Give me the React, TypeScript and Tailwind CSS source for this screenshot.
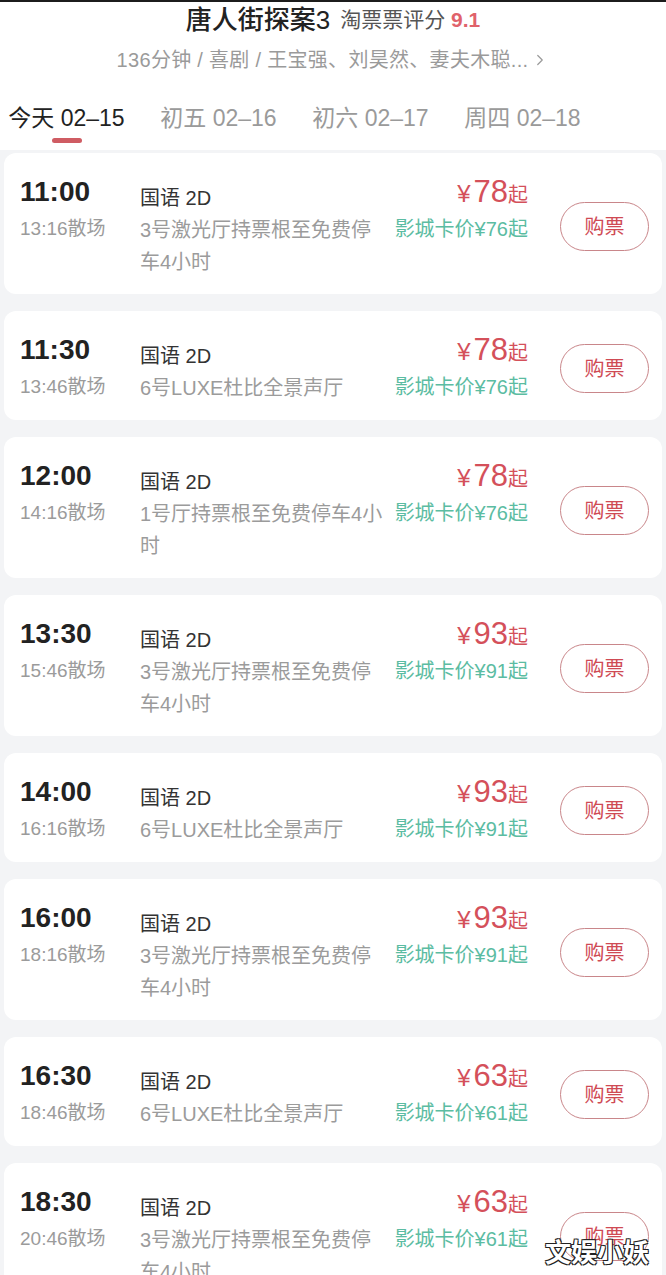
import { ChevronRight } from "lucide-react";

interface Showtime {
  start: string;
  end: string;
  hall: string;
  price: number;
  cardPrice: number;
}

const showtimes: Showtime[] = [
  { start: "11:00", end: "13:16", hall: "3号激光厅持票根至免费停车4小时", price: 78, cardPrice: 76 },
  { start: "11:30", end: "13:46", hall: "6号LUXE杜比全景声厅", price: 78, cardPrice: 76 },
  { start: "12:00", end: "14:16", hall: "1号厅持票根至免费停车4小时", price: 78, cardPrice: 76 },
  { start: "13:30", end: "15:46", hall: "3号激光厅持票根至免费停车4小时", price: 93, cardPrice: 91 },
  { start: "14:00", end: "16:16", hall: "6号LUXE杜比全景声厅", price: 93, cardPrice: 91 },
  { start: "16:00", end: "18:16", hall: "3号激光厅持票根至免费停车4小时", price: 93, cardPrice: 91 },
  { start: "16:30", end: "18:46", hall: "6号LUXE杜比全景声厅", price: 63, cardPrice: 61 },
  { start: "18:30", end: "20:46", hall: "3号激光厅持票根至免费停车4小时", price: 63, cardPrice: 61 },
];

const tabs = [
  { day: "今天", date: "02–15" },
  { day: "初五", date: "02–16" },
  { day: "初六", date: "02–17" },
  { day: "周四", date: "02–18" },
];

const ShowtimeCard = ({ item }: { item: Showtime }) => {
  return (
    <div className="flex items-start rounded-xl bg-white pb-4 pl-4 pt-[22px]">
      <div className="w-[120px] shrink-0">
        <p className="h-[34px] text-[28px] font-bold leading-[34px] text-[#222]">
          {item.start}
        </p>
        <p className="mt-[4px] text-[19px] leading-[32px] text-[#9b9b9b]">
          {item.end}散场
        </p>
      </div>

      <div className="mt-[7px] w-[246px] shrink-0">
        <p className="text-[20px] leading-[32px] text-[#333]">国语 2D</p>
        <p className="text-[20px] leading-[32px] text-[#9b9b9b]">{item.hall}</p>
      </div>

      <div className="flex flex-1 flex-col items-end">
        <div className="flex h-[34px] items-baseline leading-[34px] text-[#d4505a]">
          <span className="mr-[3px] text-[24px]">¥</span>
          <span className="text-[31px]">{item.price}</span>
          <span className="text-[20px]">起</span>
        </div>
        <p className="mt-[4px] whitespace-nowrap text-[20px] leading-[32px] text-[#5bbca2]">
          影城卡价¥{item.cardPrice}起
        </p>
      </div>

      <button
        type="button"
        className="ml-[32px] mr-[13px] flex h-[49px] w-[89px] shrink-0 items-center justify-center self-center rounded-full border border-[#c9868a] text-[20px] text-[#cf4a54]"
      >
        购票
      </button>
    </div>
  );
};

export default function App() {
  return (
    <div
      className="relative h-[1275px] w-[666px] overflow-hidden bg-[#f3f4f6]"
      style={{ fontFamily: '"Liberation Sans", "Noto Sans CJK SC", sans-serif' }}
    >
      <div className="flex h-[150px] flex-col border-t-2 border-[#1c1c1c] bg-white">
        <div className="flex h-[36px] items-center justify-center gap-[10px]">
          <span className="text-[26px] font-medium text-[#222]">唐人街探案3</span>
          <span className="text-[21px] text-[#555]">
            淘票票评分 <span className="font-bold text-[#e0626b]">9.1</span>
          </span>
        </div>

        <div className="mt-[6px] flex h-[32px] items-center justify-center text-[20px] tracking-[0.3px] text-[#9a9a9a]">
          <span>136分钟 / 喜剧 / 王宝强、刘昊然、妻夫木聪...</span>
          <ChevronRight size={18} strokeWidth={1.6} className="ml-[3px]" />
        </div>

        <div className="mt-[27px] flex gap-[35px] pl-2">
          {tabs.map((tab, index) => (
            <div key={tab.date} className="flex w-[117px] flex-col items-center">
              <span
                className={`h-[30px] whitespace-nowrap text-[23px] leading-[30px] ${
                  index === 0 ? "text-[#222]" : "text-[#9a9a9a]"
                }`}
              >
                {tab.day} {tab.date}
              </span>
              {index === 0 && (
                <span className="mt-[5px] h-[5px] w-[30px] rounded-full bg-[#cf5c63]" />
              )}
            </div>
          ))}
        </div>
      </div>

      <div className="flex flex-col gap-[17px] px-[4px] pt-[3px]">
        {showtimes.map((item) => (
          <ShowtimeCard key={item.start} item={item} />
        ))}
      </div>

      <span
        className="absolute left-[545px] top-[1234px] text-[26px] font-bold text-white"
        style={{
          textShadow:
            "1px 1px 0 #222, -1px -1px 0 #222, 1px -1px 0 #222, -1px 1px 0 #222",
        }}
      >
        文娱小妖
      </span>
    </div>
  );
}
